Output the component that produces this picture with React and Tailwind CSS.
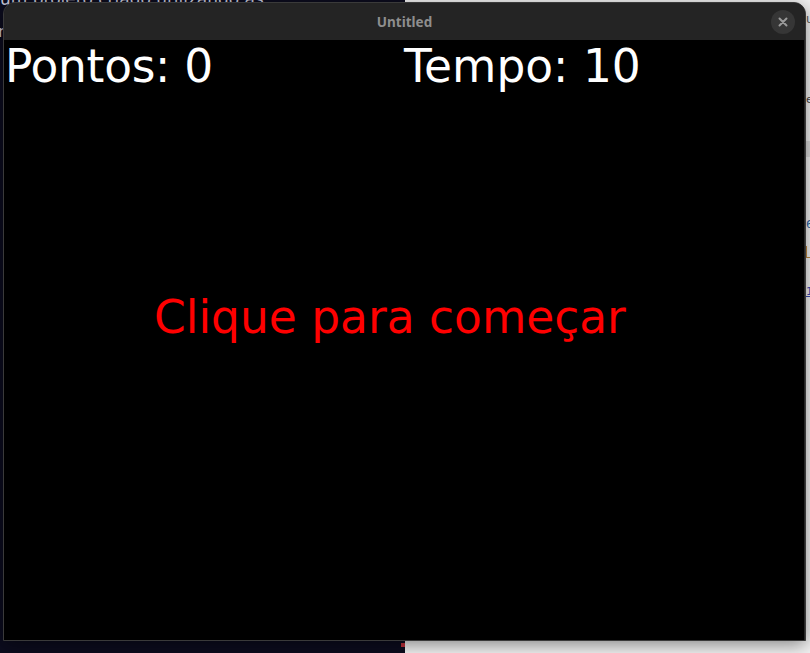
export default function App() {
  const font = { fontFamily: '"DejaVu Sans", "Liberation Sans", sans-serif' };
  return (
    <div className="relative w-[810px] h-[653px] overflow-hidden" style={font}>
      {/* desktop background */}
      <div className="absolute inset-0 grid grid-cols-[405px_405px] grid-rows-[641px_12px]">
        <div className="bg-[#0c0c1e] overflow-hidden">
          <div className="-mt-[11px] text-[17px] leading-[20px] text-[#c8c8d8] whitespace-nowrap">um projeto criado utilizando as</div>
          <div className="mt-[11px] -ml-[2px] text-[16px] text-[#c8c8d8]">m</div>
        </div>
        <div className="bg-[#f3f3f3] flex flex-col pl-[401px] overflow-hidden">
          <div className="text-[12px] mt-[12px] text-[#555] leading-[14px]">u</div>
          <div className="text-[11px] mt-[67px] text-[#444] leading-[14px]">es</div>
          <div className="mt-[34px] w-[4px] h-[16px] bg-[#ddd]" />
          <div className="text-[11px] mt-[61px] text-[#2563a8] leading-[14px]">6</div>
          <div className="mt-[14px] w-[4px] h-[12px] border-l border-b border-[#c08a40]" />
          <div className="text-[11px] mt-[27px] text-[#3b4bb0] underline leading-[14px]">15</div>
        </div>
        <div className="bg-[#0c0c1e] flex justify-end items-start pt-[2px]">
          <div className="w-[4px] h-[4px] bg-[#c0303a]" />
        </div>
        <div className="bg-[#f3f3f3]" />
      </div>

      {/* window */}
      <div className="absolute left-[3px] top-[2px] w-[803px] h-[639px] rounded-t-[12px] border border-[#3a3a3a] bg-[#242424] flex flex-col overflow-hidden shadow-[0_4px_18px_rgba(0,0,0,0.45)]">
        <div className="h-[37px] shrink-0 grid grid-cols-[1fr_auto_1fr] items-center bg-[#242424]">
          <div />
          <span className="text-[13.5px] font-bold text-[#8e8e8e] mt-[2px]" style={{ fontFamily: '"Noto Sans", "DejaVu Sans", sans-serif' }}>Untitled</span>
          <div className="flex justify-end pr-[10px]">
            <div className="w-[24px] h-[24px] rounded-full bg-[#363636] flex items-center justify-center">
              <svg width="10" height="10" viewBox="0 0 10 10">
                <path d="M1.5 1.5 L8.5 8.5 M8.5 1.5 L1.5 8.5" stroke="#9a9a9a" strokeWidth="2" strokeLinecap="round" />
              </svg>
            </div>
          </div>
        </div>
        <div className="w-[800px] h-[600px] bg-black flex flex-col">
          <div className="grid grid-cols-[400px_400px] text-[45.5px] leading-[53px] text-white whitespace-nowrap">
            <div className="pl-[1px] tracking-[-0.3px]">Pontos: 0</div>
            <div className="pl-[0px]">Tempo: 10</div>
          </div>
          <div className="mt-[198px] pl-[150px] text-[45.5px] leading-[53px] text-[#ff0000] whitespace-nowrap">Clique para começar</div>
        </div>
      </div>
    </div>
  );
}
